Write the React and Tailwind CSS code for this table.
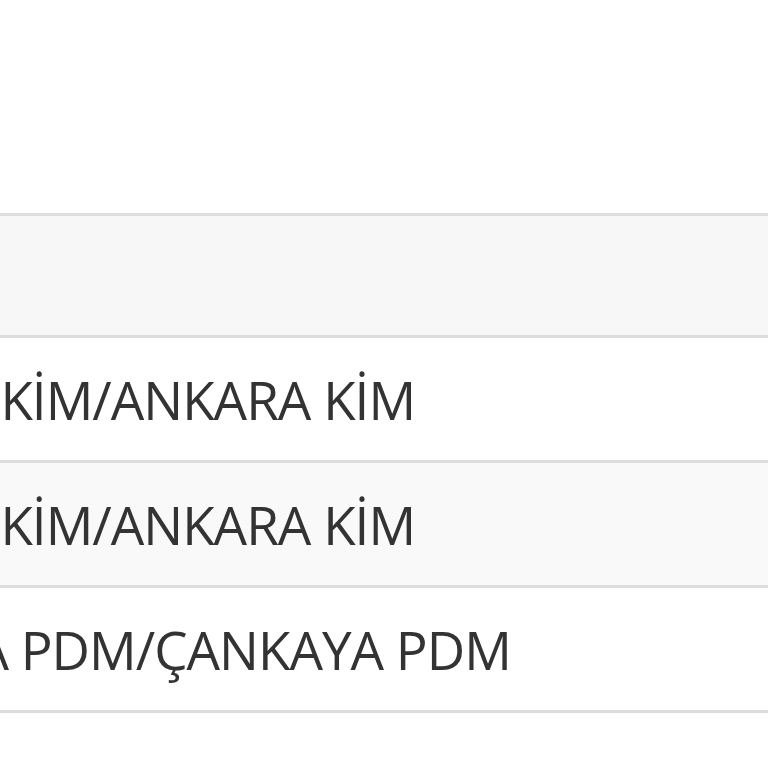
import React from 'react';

const rows = [
  { lead: 'ANKARA ', text: 'KİM/ANKARA KİM', bg: 'bg-white', shift: '-ml-[212px]' },
  { lead: 'ANKARA ', text: 'KİM/ANKARA KİM', bg: 'bg-[#f9f9f9]', shift: '-ml-[212px]' },
  { lead: 'ÇANKAYA ', text: 'PDM/ÇANKAYA PDM', bg: 'bg-white', shift: '-ml-[221px]' },
];

export default function App() {
  return (
    <div className="w-[768px] h-[768px] bg-white overflow-hidden font-['Open_Sans',sans-serif] text-[#333]">
      <div className="h-[213px]" />
      <div className="border-t-[3px] border-[#dddddd]">
        <div className="h-[122px] bg-[#f7f7f7] border-b-[3px] border-[#dddddd]" />
        {rows.map((r, i) => (
          <div
            key={i}
            className={`h-[125px] ${r.bg} border-b-[3px] border-[#dddddd] flex items-center overflow-hidden whitespace-nowrap`}
          >
            <span className={`text-[53px] leading-none tracking-[-1px] ${r.shift}`}>
              {r.lead}{r.text}
            </span>
          </div>
        ))}
      </div>
    </div>
  );
}
